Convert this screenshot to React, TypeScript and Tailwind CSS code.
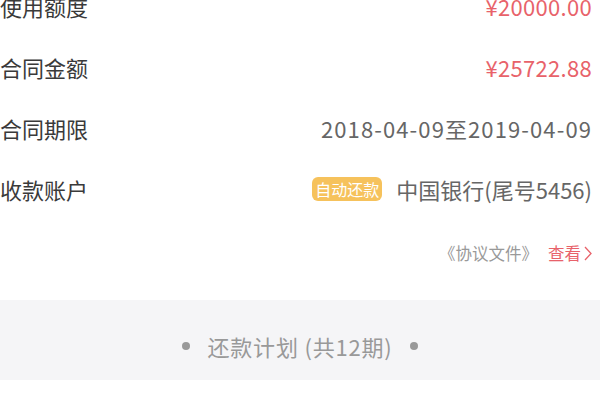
import React from "react";

// Contract detail block: key/value rows, agreement link, then the plan header.

const FONT = { fontFamily: '"Noto Sans CJK SC", "Noto Sans", sans-serif' };

const rows: { label: string; value: string; red?: boolean; wide?: boolean }[] = [
  { label: "使用额度", value: "¥20000.00", red: true },
  { label: "合同金额", value: "¥25722.88", red: true },
  { label: "合同期限", value: "2018-04-09至2019-04-09", wide: true },
];

function Row({ label, children }: { label: string; children: React.ReactNode }) {
  return (
    <div className="flex h-[61px] items-center justify-between">
      <span className="text-[22px] leading-none text-[#3a3a3a]">{label}</span>
      <div className="flex items-center">{children}</div>
    </div>
  );
}

function Chevron() {
  return (
    <svg width="8" height="15" viewBox="0 0 8 15" className="ml-[3px]">
      <path d="M1 1 L7 7.5 L1 14" fill="none" stroke="#e8626a" strokeWidth="1.3" />
    </svg>
  );
}

export default function App() {
  return (
    <div className="h-[400px] w-[600px] overflow-hidden bg-white" style={FONT}>
      <div className="-mt-[25px] pr-2">
        {rows.map((r) => (
          <Row key={r.label} label={r.label}>
            <span
              className={
                r.red
                  ? "text-[22px] leading-none tracking-[0.3px] text-[#e8626a]"
                  : "text-[22px] leading-none tracking-[1.1px] text-[#666666]"
              }
            >
              {r.value}
            </span>
          </Row>
        ))}
        <Row label="收款账户">
          <span className="mr-[14px] rounded-[6px] bg-[#f6c25c] px-[3px] py-[3px] text-[16px] leading-[18px] text-white">
            自动还款
          </span>
          <span className="text-[22px] leading-none text-[#666666]">中国银行(尾号5456)</span>
        </Row>
        <div className="mt-[4px] flex h-[61px] items-center justify-end">
          <span className="text-[16.5px] leading-none text-[#999999]">《协议文件》</span>
          <span className="ml-[10px] text-[16.5px] leading-none text-[#e8626a]">查看</span>
          <Chevron />
        </div>
      </div>
      <div className="mt-[16px] flex h-[80px] items-center justify-center bg-[#f5f5f7] pt-[12px]">
        <span className="h-[8px] w-[8px] rounded-full bg-[#999999]" />
        <span className="mx-[17px] text-[22px] leading-none tracking-[0.8px] text-[#999999]">
          还款计划 (共12期)
        </span>
        <span className="h-[8px] w-[8px] rounded-full bg-[#999999]" />
      </div>
    </div>
  );
}
